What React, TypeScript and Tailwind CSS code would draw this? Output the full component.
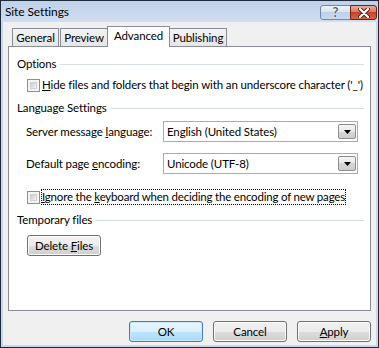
const btn =
  "h-[21px] w-[74px] rounded-[3px] border border-[#707070] bg-[linear-gradient(#f2f2f2_0%,#ebebeb_50%,#dddddd_50%,#cfcfcf_100%)] shadow-[inset_0_0_0_1px_#fcfcfc] flex items-center justify-center";

function CheckBox() {
  return (
    <div className="w-[13px] h-[13px] border border-[#8e8f8f] bg-[#f4f4f4] p-[2px] shrink-0">
      <div className="w-full h-full bg-[linear-gradient(135deg,#cbcbcb,#f3f3f3)] border border-[#d0d0d0]" />
    </div>
  );
}

function Header({ label }: { label: string }) {
  return (
    <div className="flex items-center h-[16px]">
      <span>{label}</span>
      <div className="flex-1 h-px bg-[#d5dfe5] ml-[4px]" />
    </div>
  );
}

function Select({ value }: { value: string }) {
  return (
    <div className="w-[195px] h-[21px] border border-[#a5acb5] bg-white flex items-center pl-[3px] pr-[1px]">
      <span className="flex-1">{value}</span>
      <div className="w-[18px] h-[15px] border border-[#8c8c8c] rounded-[2px] bg-[linear-gradient(#f4f4f4_0%,#e8e8e8_50%,#d6d6d6_50%,#cdcdcd_100%)] flex items-center justify-center">
        <svg width="7" height="4" viewBox="0 0 7 4">
          <path d="M0 0H7L3.5 4Z" fill="#000" />
        </svg>
      </div>
    </div>
  );
}

export default function App() {
  return (
    <div className="w-[379px] h-[348px] bg-[#c6d7ec] border border-[#1d2a3c] flex flex-col font-['Lato',sans-serif] text-[11.5px] tracking-[-0.12px] text-black leading-[16px] whitespace-nowrap select-none">
      {/* title bar */}
      <div className="h-[21px] flex items-start justify-between bg-[linear-gradient(#bfd1e8,#d0def0)]">
        <span className="pl-[4px] pt-[3px] text-[12px]">Site Settings</span>
        <div className="flex pt-[4px] pr-[1px]">
          <div className="w-[31px] h-[15px] rounded-l-[3px] border border-[#6f86a8] bg-[linear-gradient(#eef3fa_0%,#d7e3f2_50%,#bfd1e8_50%,#c9d9ee_100%)] flex items-center justify-center">
            <span className="text-[13px] leading-[13px] font-bold text-[#5b6572] [text-shadow:0_0_1px_#fff,0_0_2px_#fff]">?</span>
          </div>
          <div className="w-[27px] h-[15px] -ml-px rounded-r-[3px] border border-[#6b2418] bg-[linear-gradient(#e9a99b_0%,#d8735f_50%,#c4432a_50%,#d2654c_100%)] flex items-center justify-center">
            <svg width="12" height="10" viewBox="0 0 12 10">
              <path d="M2 1L10 9M10 1L2 9" stroke="#5a1a10" strokeWidth="4" strokeLinecap="round" />
              <path d="M2 1L10 9M10 1L2 9" stroke="#ffffff" strokeWidth="2.2" strokeLinecap="round" />
            </svg>
          </div>
        </div>
      </div>
      {/* body */}
      <div className="flex-1 mx-[2px] mb-[2px] bg-[#f0f0f0] flex flex-col">
        {/* tabs */}
        <div className="flex items-end pt-[4px] pl-[9px] h-[24px]">
          <div className="w-[47px] h-[18px] border border-b-0 border-[#898c95] bg-[linear-gradient(#f3f3f3,#e6e6e6)] flex items-center justify-center">General</div>
          <div className="ml-px w-[48px] h-[18px] border border-b-0 border-[#898c95] bg-[linear-gradient(#f3f3f3,#e6e6e6)] flex items-center justify-center">Preview</div>
          <div className="-ml-px w-[63px] h-[21px] -mb-px relative z-10 border border-b-0 border-[#898c95] bg-white flex items-start pt-[1px] justify-center">Advanced</div>
          <div className="w-[57px] h-[18px] border border-b-0 border-l-0 border-[#898c95] bg-[linear-gradient(#f3f3f3,#e6e6e6)] flex items-center justify-center">Publishing</div>
        </div>
        {/* panel */}
        <div className="mx-[5px] h-[265px] border border-[#898c95] bg-white flex flex-col pl-[8px] pr-[6px] pt-[9px]">
          <Header label="Options" />
          <div className="mt-[5px] h-[16px] flex items-center pl-[10px]">
            <CheckBox />
            <span className="ml-[2px]">
              <u>H</u>ide files and folders that begin with an underscore character ('_')
            </span>
          </div>
          <div className="mt-[7px]">
            <Header label="Language Settings" />
          </div>
          <div className="mt-[5px] flex items-center pl-[9px]">
            <span className="w-[137px]">
              Server message <u>l</u>anguage:
            </span>
            <Select value="English (United States)" />
          </div>
          <div className="mt-[11px] flex items-center pl-[9px]">
            <span className="w-[137px]">
              Default page <u>e</u>ncoding:
            </span>
            <Select value="Unicode (UTF-8)" />
          </div>
          <div className="mt-[15px] h-[16px] flex items-center pl-[10px]">
            <CheckBox />
            <span className="ml-px border border-dotted border-black px-0 leading-[14px] tracking-[-0.2px]">
              <u>I</u>gnore the <u>k</u>eyboard when deciding the encoding of new pages
            </span>
          </div>
          <div className="mt-[7px]">
            <Header label="Temporary files" />
          </div>
          <div className="mt-[7px] pl-[10px]">
            <div className={btn + " h-[20px]"}>
              <span>
                Delete <u>F</u>iles
              </span>
            </div>
          </div>
        </div>
        {/* buttons */}
        <div className="mt-[10px] flex justify-end gap-[10px] pr-[5px]">
          <div className="h-[21px] w-[74px] rounded-[3px] border border-[#3c7fb1] bg-[linear-gradient(#eaf6fd_0%,#d9f0fc_50%,#bee6fd_50%,#a7d9f5_100%)] shadow-[inset_0_0_0_1px_#cde9f8] flex items-center justify-center">OK</div>
          <div className={btn}>Cancel</div>
          <div className={btn}>
            <span>
              <u>A</u>pply
            </span>
          </div>
        </div>
      </div>
    </div>
  );
}
